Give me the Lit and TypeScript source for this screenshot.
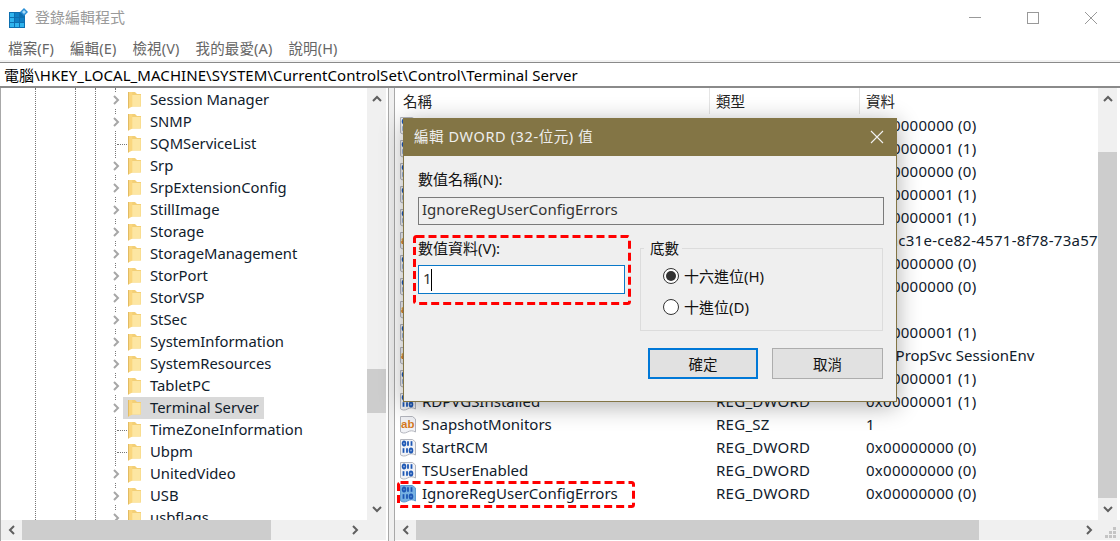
import { LitElement, html, css, svg } from "lit";
import { customElement } from "lit/decorators.js";

const treeRows: [string, boolean][] = [
  ["Session Manager", true], ["SNMP", true], ["SQMServiceList", false], ["Srp", true],
  ["SrpExtensionConfig", true], ["StillImage", true], ["Storage", true], ["StorageManagement", true],
  ["StorPort", true], ["StorVSP", true], ["StSec", true], ["SystemInformation", true],
  ["SystemResources", true], ["TabletPC", true], ["Terminal Server", true], ["TimeZoneInformation", false],
  ["Ubpm", false], ["UnitedVideo", true], ["USB", true], ["usbflags", true],
];

const D0 = "0x00000000 (0)";
const D1 = "0x00000001 (1)";
const DW = "REG_DWORD";
const listRows: [string, string, string, string][] = [
  ["dw", "AllowRemoteRPC", DW, D0],
  ["dw", "DelayConMgrTimeout", DW, D1],
  ["dw", "DeleteTempDirsOnExit", DW, D0],
  ["dw", "fDenyTSConnections", DW, D1],
  ["dw", "fSingleSessionPerUser", DW, D1],
  ["ab", "InstanceID", "REG_SZ", "{e0ac31e-ce82-4571-8f78-73a57"],
  ["dw", "GlassSessionId", DW, D0],
  ["dw", "NotificationTimeOut", DW, D0],
  ["ab", "ProductVersion", "REG_SZ", ""],
  ["dw", "PerSessionTempDir", DW, D1],
  ["ab", "RCDependentServices", "REG_MULTI_SZ", "CertPropSvc SessionEnv"],
  ["dw", "RailShowallNotifyIcons", DW, D1],
  ["dw", "RDPVGSInstalled", DW, D1],
  ["ab", "SnapshotMonitors", "REG_SZ", "1"],
  ["dw", "StartRCM", DW, D0],
  ["dw", "TSUserEnabled", DW, D0],
  ["dw", "IgnoreRegUserConfigErrors", DW, D0],
];

const folder = svg`<svg class="folder" width="14" height="18" viewBox="0 0 14 18">
  <path d="M1 1h6l2 2h4v12.5H1z" fill="#f3cf76"/>
  <path d="M4 4h8.6v11.5H4z" fill="#fde6a2"/>
  <path d="M0.5 1h3.8v14.5L0.5 17.5z" fill="#fad67e"/>
  <path d="M0.5 1v16.5" stroke="#e2bb63" stroke-width="1" fill="none"/>
</svg>`;

const dwIcon = (sel: boolean) => svg`<svg class="vicon" width="18" height="20" viewBox="0 0 18 20">
  <path d="M1.5 1.5h12l3 2.5v13c-3-1.6-5-1.6-8 0s-5 1.2-7-.2z" fill="${sel ? "#76b1e2" : "#f1f2f6"}" stroke="${sel ? "#5e9ad2" : "#b4b6be"}"/>
  <g fill="none" stroke="#1d57b5" stroke-width="1.8">
    <ellipse cx="5" cy="5.5" rx="1.4" ry="2"/><path d="M9 3.2v4.6"/><path d="M12.5 3.2v4.6"/>
    <path d="M4.5 10.2v4.6"/><path d="M8 10.2v4.6"/><ellipse cx="12" cy="12.5" rx="1.4" ry="2"/>
  </g>
</svg>`;

const abIcon = svg`<svg class="vicon" width="18" height="20" viewBox="0 0 18 20">
  <path d="M1.5 1.5h12l3 2.5v13c-3-1.6-5-1.6-8 0s-5 1.2-7-.2z" fill="#f1f2f6" stroke="#b4b6be"/>
  <text x="8.8" y="12.5" text-anchor="middle" font-family="'Liberation Sans', sans-serif" font-weight="700" font-size="11.5" fill="#d67a22">ab</text>
</svg>`;

const chev = (d: string) => svg`<svg class="chev" width="10" height="10" viewBox="0 0 10 10"><path d="${d}" fill="none" stroke="currentColor" stroke-width="2"/></svg>`;
const UP = "M1 7l4-4 4 4";
const DOWN = "M1 3l4 4 4-4";
const LEFT = "M7 1L3 5l4 4";
const RIGHT = "M3 1l4 4-4 4";

@customElement("app-root")
export class AppRoot extends LitElement {
  static styles = css`
    :host {
      display: block; position: relative; width: 1120px; height: 541px; overflow: hidden; background: #fff;
      font-family: "Noto Sans", "Noto Sans CJK TC", sans-serif; font-size: 14.5px; color: #000;
    }
    * { box-sizing: border-box; }
    .title { height: 36px; display: flex; align-items: center; padding-left: 9px; }
    .title .name { margin-left: 7px; padding-bottom: 4px; font-size: 15px; color: #9a9a9a; flex: 1; }
    .winbtn { width: 58px; height: 36px; display: flex; align-items: center; justify-content: center; color: #999; }
    .menu { height: 24px; display: flex; align-items: center; padding: 0 0 2px 8px; gap: 16px; color: #666; font-size: 14.5px; letter-spacing: .14px; }
    .strip { height: 2px; background: #f2f2f2; }
    .addr { height: 26px; border-top: 1px solid #8a8a8a; border-bottom: 2px solid #8a8a8a; padding-left: 4px; display: flex; align-items: center; white-space: nowrap; font-size: 15px; letter-spacing: .07px; }
    .panes { display: flex; height: 453px; }
    .left { width: 389px; border-left: 1px solid #a8a8a8; border-right: 1px solid #a8a8a8; display: grid; grid-template-columns: 366px 19px; grid-template-rows: 432px 20px; align-content: start; }
    .split { width: 6px; background: #f0f0f0; border-right: 1px solid #a8a8a8; }
    .right { width: 725px; display: grid; grid-template-columns: 703px 19px 3px; grid-template-rows: 432px 20px; }
    .tree { position: relative; overflow: hidden; padding-top: 1px; }
    .guide { position: absolute; top: 0; bottom: 0; border-left: 1px dotted #777; }
    .g1 { left: 34px; } .g2 { left: 74px; } .g3 { left: 94px; } .g4 { left: 114px; }
    .trow { position: relative; height: 22px; display: flex; align-items: center; padding-left: 110px; white-space: nowrap; }
    .twist { width: 12px; height: 16px; display: flex; align-items: center; background: #fff; color: #a6a6a6; }
    .leaf { width: 12px; height: 1px; border-top: 1px dotted #777; margin-left: 6px; margin-right: -6px; }
    .node { height: 22px; display: flex; align-items: center; padding: 0 5px; font-size: 14.8px; color: #10202c; }
    .node span { padding-bottom: 2px; }
    .node.sel { background: #d9d9d9; }
    .folder { margin-right: 8px; flex: none; }
    .sb { background: #f0f0f0; display: flex; color: #5f5f5f; }
    .sb.v { flex-direction: column; }
    .span-l { grid-column: 1 / 3; }
    .span-r { grid-column: 1 / 4; }
    .sbtn { flex: none; display: flex; align-items: center; justify-content: center; }
    .v .sbtn { height: 22px; }
    .h .sbtn { width: 21px; }
    .track { flex: 1; min-width: 0; min-height: 0; }
    .thumb { background: #cdcdcd; }
    .h .thumb { height: 100%; }
    .t-tree-v { margin-top: 259px; height: 44px; }
    .t-list-v { margin-top: 42px; height: 346px; }
    .t-tree-h { width: 249px; }
    .t-list-h { width: 563px; }
    .list { overflow: hidden; }
    .lhead { height: 26px; display: grid; grid-template-columns: 315px 150px 1fr; }
    .lhead div { padding: 0 0 2px 8px; border-right: 1px solid #e5e5e5; display: flex; align-items: center; font-size: 14.5px; color: #222; }
    .lhead div + div { padding-left: 6px; }
    .lhead div:last-child { border-right: 0; }
    .lrow { height: 23px; display: grid; grid-template-columns: 315px 150px 1fr; align-items: center; white-space: nowrap; font-size: 15px; color: #10202c; }
    .lname { display: flex; align-items: center; padding-left: 4px; }
    .lname span { padding-bottom: 2px; }
    .vicon { flex: none; margin-right: 5px; }
    .ltype, .ldata { padding: 0 0 2px 6px; letter-spacing: .27px; }
    .ldata.plain { letter-spacing: 0; }
    .dialog {
      position: absolute; left: 403px; top: 118px; width: 494px; height: 284px; background: #efefef;
      border: 1px solid #837545; border-top: 0; box-shadow: 0 4px 22px rgba(0,0,0,.32);
    }
    .dtitle { height: 38px; margin: 0 -1px; background: #837545; color: #eeeeee; display: flex; align-items: center; padding: 0 13px 0 11px; font-size: 14.5px; justify-content: space-between; }
    .dtitle span { padding-bottom: 4px; letter-spacing: .6px; }
    .dbody { padding: 14px 12px 0 14px; }
    .lbl { height: 20px; display: flex; align-items: center; padding-bottom: 4px; font-size: 15px; color: #111; }
    .nameinp { margin-top: 7px; height: 28px; border: 1px solid #7a7a7a; background: #efefef; padding: 0 0 5px 3px; display: flex; align-items: center; font-size: 15px; color: #333; }
    .mid { margin-top: 14px; display: flex; height: 92px; }
    .lcol { width: 222px; }
    .valinp { margin-top: 6px; width: 207px; height: 29px; border: 1px solid #0a78c8; background: #fff; display: flex; align-items: center; padding-left: 4px; font-size: 15px; color: #333; }
    .valinp span { padding-bottom: 4px; }
    .caret { width: 1px; height: 22px; background: #000; margin-left: -1px; }
    fieldset { margin: -1px 0 0; padding: 8px 0 0 22px; width: 243px; height: 93px; border: 1px solid #dcdcdc; min-width: 0; display: flex; flex-direction: column; gap: 11px; }
    legend { padding: 0 3px 0 6px; margin-left: -19px; height: 20px; line-height: 20px; font-size: 14.5px; color: #111; }
    .radio { height: 20px; display: flex; align-items: center; gap: 5px; font-size: 15px; color: #111; }
    .radio span:last-child { padding-bottom: 2px; }
    .dot { width: 16px; height: 16px; border-radius: 50%; border: 1px solid #333; background: #fff; display: flex; align-items: center; justify-content: center; }
    .dot i { width: 10px; height: 10px; border-radius: 50%; background: #333; }
    .btns { display: flex; justify-content: flex-end; gap: 14px; margin-top: 17px; margin-right: 1px; }
    .btn { width: 111px; height: 31px; background: #e1e1e1; border: 1px solid #adadad; display: flex; align-items: center; justify-content: center; font-size: 14.5px; color: #111; }
    .btn.def { width: 110px; border: 2px solid #0078d7; }
    .mark { position: absolute; overflow: visible; }
    .m1 { left: 413px; top: 235px; }
    .m2 { left: 397px; top: 481px; }
    .grip { position: absolute; left: 1105px; top: 527px; }
  `;

  private sb(dir: "v" | "h", thumb: string, a: string, b: string) {
    return html`<div class="sb ${dir}">
      <div class="sbtn">${chev(a)}</div>
      <div class="track"><div class="thumb ${thumb}"></div></div>
      <div class="sbtn">${chev(b)}</div>
    </div>`;
  }

  render() {
    return html`
      <div class="title">
        <svg width="19" height="20" viewBox="0 0 19 20">
          <rect x="0" y="4" width="16" height="16" fill="#0d6fb0"/>
          <g fill="#2fb4ee">
            <rect x="1" y="5" width="4" height="4"/><rect x="6" y="5" width="4" height="4" fill="#0f7fc4"/>
            <rect x="1" y="10" width="4" height="4"/><rect x="6" y="10" width="4" height="4" fill="#0f7fc4"/><rect x="11" y="10" width="4" height="4" fill="#0f7fc4"/>
            <rect x="1" y="15" width="4" height="4"/><rect x="6" y="15" width="4" height="4"/><rect x="11" y="15" width="4" height="4"/>
          </g>
          <path d="M15 0l4 4-4 4-4-4z" fill="#2b8fd6"/><path d="M15 2l2 2-2 2-2-2z" fill="#a8dcf7"/>
        </svg>
        <div class="name">登錄編輯程式</div>
        <div class="winbtn"><svg width="12" height="12" viewBox="0 0 12 12"><path d="M0 5.5h12" stroke="currentColor"/></svg></div>
        <div class="winbtn"><svg width="12" height="12" viewBox="0 0 12 12"><rect x=".5" y=".5" width="11" height="11" fill="none" stroke="currentColor"/></svg></div>
        <div class="winbtn"><svg width="12" height="12" viewBox="0 0 12 12"><path d="M0 0l12 12M12 0L0 12" stroke="currentColor"/></svg></div>
      </div>
      <div class="menu"><span>檔案(F)</span><span>編輯(E)</span><span>檢視(V)</span><span>我的最愛(A)</span><span>說明(H)</span></div>
      <div class="strip"></div>
      <div class="addr">電腦\\HKEY_LOCAL_MACHINE\\SYSTEM\\CurrentControlSet\\Control\\Terminal Server</div>
      <div class="panes">
        <div class="left">
          <div class="tree">
            <div class="guide g1"></div><div class="guide g2"></div><div class="guide g3"></div><div class="guide g4"></div>
            ${treeRows.map(([n, exp]) => html`<div class="trow">
              ${exp ? html`<div class="twist">${chev(RIGHT)}</div>` : html`<div class="leaf"></div>`}
              <div class="node ${n === "Terminal Server" ? "sel" : ""}">${folder}<span>${n}</span></div>
            </div>`)}
          </div>
          ${this.sb("v", "t-tree-v", UP, DOWN)}
          <div class="sb h span-l">
            <div class="sbtn">${chev(LEFT)}</div>
            <div class="track"><div class="thumb t-tree-h"></div></div>
            <div class="sbtn">${chev(RIGHT)}</div>
            <div class="sbtn"></div>
          </div>
        </div>
        <div class="split"></div>
        <div class="right">
          <div class="list">
            <div class="lhead"><div>名稱</div><div>類型</div><div>資料</div></div>
            ${listRows.map(([k, n, t, d]) => html`<div class="lrow">
              <div class="lname">${k === "ab" ? abIcon : dwIcon(n === "IgnoreRegUserConfigErrors")}<span>${n}</span></div>
              <div class="ltype">${t}</div>
              <div class="ldata ${d.startsWith("Cert") ? "plain" : ""}">${d}</div>
            </div>`)}
          </div>
          ${this.sb("v", "t-list-v", UP, DOWN)}
          <div></div>
          <div class="sb h span-r">
            <div class="sbtn">${chev(LEFT)}</div>
            <div class="track"><div class="thumb t-list-h"></div></div>
            <div class="sbtn">${chev(RIGHT)}</div>
            <div class="sbtn"></div>
          </div>
        </div>
      </div>

      <div class="dialog">
        <div class="dtitle">
          <span>編輯 DWORD (32-位元) 值</span>
          <svg width="14" height="14" viewBox="0 0 14 14"><path d="M1 1l12 12M13 1L1 13" stroke="#f2f2f2" stroke-width="1.1"/></svg>
        </div>
        <div class="dbody">
          <div class="lbl">數值名稱(N):</div>
          <div class="nameinp">IgnoreRegUserConfigErrors</div>
          <div class="mid">
            <div class="lcol">
              <div class="lbl">數值資料(V):</div>
              <div class="valinp"><span>1</span><i class="caret"></i></div>
            </div>
            <fieldset>
              <legend>底數</legend>
              <div class="radio"><span class="dot"><i></i></span><span>十六進位(H)</span></div>
              <div class="radio"><span class="dot"></span><span>十進位(D)</span></div>
            </fieldset>
          </div>
          <div class="btns"><div class="btn def">確定</div><div class="btn">取消</div></div>
        </div>
      </div>

      <svg class="mark m1" width="218" height="70"><rect x="1.5" y="1.5" width="215" height="67" rx="2" fill="none" stroke="#f00" stroke-width="3" stroke-dasharray="8 4"/></svg>
      <svg class="mark m2" width="238" height="27"><rect x="1.5" y="1.5" width="235" height="24" rx="2" fill="none" stroke="#f00" stroke-width="3" stroke-dasharray="8 4"/></svg>
      <svg class="grip" width="12" height="12" viewBox="0 0 12 12" fill="#c4c4c4">
        <rect x="8" y="0" width="3" height="3"/><rect x="4" y="4" width="3" height="3"/><rect x="8" y="4" width="3" height="3"/>
        <rect x="0" y="8" width="3" height="3"/><rect x="4" y="8" width="3" height="3"/><rect x="8" y="8" width="3" height="3"/>
      </svg>
    `;
  }
}
